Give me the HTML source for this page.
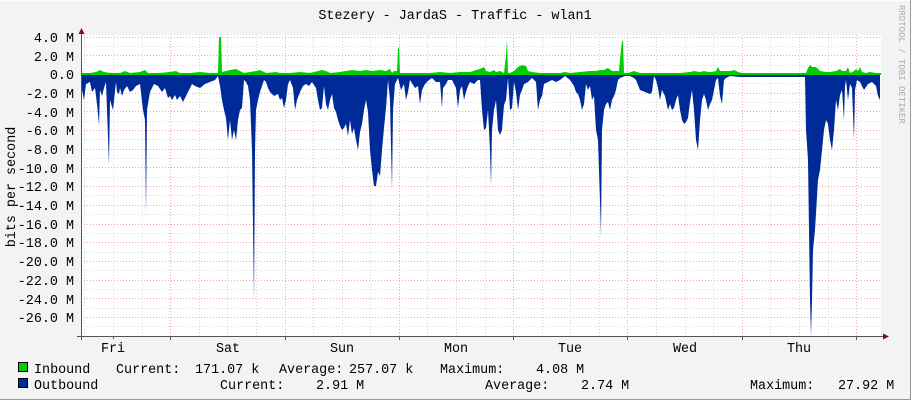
<!DOCTYPE html>
<html><head><meta charset="utf-8"><style>
html,body{margin:0;padding:0;background:#f3f3f3;}
svg{display:block}
text{font-family:"Liberation Mono","DejaVu Sans Mono",monospace;font-size:13.4px;fill:#000}
</style></head><body>
<svg width="911" height="400" viewBox="0 0 911 400" xmlns="http://www.w3.org/2000/svg">
<rect x="0" y="0" width="911" height="400" fill="#f3f3f3"/>
<line x1="0" y1="0.5" x2="911" y2="0.5" stroke="#fcfcfc"/>
<line x1="0" y1="399.5" x2="911" y2="399.5" stroke="#999"/>
<line x1="910.5" y1="0" x2="910.5" y2="400" stroke="#999"/>
<rect x="81" y="35" width="800" height="301" fill="#fff"/>
<g id="grid" stroke-width="1" shape-rendering="crispEdges">
<g stroke="#d6d6d6" stroke-dasharray="1,2">
<line x1="81" y1="46.5" x2="881" y2="46.5"/><line x1="81" y1="65.5" x2="881" y2="65.5"/><line x1="81" y1="83.5" x2="881" y2="83.5"/><line x1="81" y1="102.5" x2="881" y2="102.5"/><line x1="81" y1="121.5" x2="881" y2="121.5"/><line x1="81" y1="139.5" x2="881" y2="139.5"/><line x1="81" y1="158.5" x2="881" y2="158.5"/><line x1="81" y1="177.5" x2="881" y2="177.5"/><line x1="81" y1="195.5" x2="881" y2="195.5"/><line x1="81" y1="214.5" x2="881" y2="214.5"/><line x1="81" y1="233.5" x2="881" y2="233.5"/><line x1="81" y1="252.5" x2="881" y2="252.5"/><line x1="81" y1="270.5" x2="881" y2="270.5"/><line x1="81" y1="289.5" x2="881" y2="289.5"/><line x1="81" y1="308.5" x2="881" y2="308.5"/><line x1="81" y1="326.5" x2="881" y2="326.5"/>
<line x1="84.5" y1="35" x2="84.5" y2="336"/><line x1="113.5" y1="35" x2="113.5" y2="336"/><line x1="142.5" y1="35" x2="142.5" y2="336"/><line x1="199.5" y1="35" x2="199.5" y2="336"/><line x1="227.5" y1="35" x2="227.5" y2="336"/><line x1="256.5" y1="35" x2="256.5" y2="336"/><line x1="313.5" y1="35" x2="313.5" y2="336"/><line x1="342.5" y1="35" x2="342.5" y2="336"/><line x1="370.5" y1="35" x2="370.5" y2="336"/><line x1="427.5" y1="35" x2="427.5" y2="336"/><line x1="456.5" y1="35" x2="456.5" y2="336"/><line x1="485.5" y1="35" x2="485.5" y2="336"/><line x1="542.5" y1="35" x2="542.5" y2="336"/><line x1="570.5" y1="35" x2="570.5" y2="336"/><line x1="599.5" y1="35" x2="599.5" y2="336"/><line x1="656.5" y1="35" x2="656.5" y2="336"/><line x1="685.5" y1="35" x2="685.5" y2="336"/><line x1="713.5" y1="35" x2="713.5" y2="336"/><line x1="770.5" y1="35" x2="770.5" y2="336"/><line x1="799.5" y1="35" x2="799.5" y2="336"/><line x1="828.5" y1="35" x2="828.5" y2="336"/>
</g>
<g stroke="#f0a8a8" stroke-dasharray="1,2">
<line x1="81" y1="37.5" x2="881" y2="37.5"/><line x1="81" y1="55.5" x2="881" y2="55.5"/><line x1="81" y1="74.5" x2="881" y2="74.5"/><line x1="81" y1="93.5" x2="881" y2="93.5"/><line x1="81" y1="111.5" x2="881" y2="111.5"/><line x1="81" y1="130.5" x2="881" y2="130.5"/><line x1="81" y1="149.5" x2="881" y2="149.5"/><line x1="81" y1="167.5" x2="881" y2="167.5"/><line x1="81" y1="186.5" x2="881" y2="186.5"/><line x1="81" y1="205.5" x2="881" y2="205.5"/><line x1="81" y1="224.5" x2="881" y2="224.5"/><line x1="81" y1="242.5" x2="881" y2="242.5"/><line x1="81" y1="261.5" x2="881" y2="261.5"/><line x1="81" y1="280.5" x2="881" y2="280.5"/><line x1="81" y1="298.5" x2="881" y2="298.5"/><line x1="81" y1="317.5" x2="881" y2="317.5"/>
<line x1="170.5" y1="35" x2="170.5" y2="336"/><line x1="285.5" y1="35" x2="285.5" y2="336"/><line x1="399.5" y1="35" x2="399.5" y2="336"/><line x1="513.5" y1="35" x2="513.5" y2="336"/><line x1="627.5" y1="35" x2="627.5" y2="336"/><line x1="742.5" y1="35" x2="742.5" y2="336"/><line x1="856.5" y1="35" x2="856.5" y2="336"/>
</g>
</g>
<path fill="#002a97" d="M81,74 L82,90 84,100 86,84 90,82 92,92 95,88 97,104 99,125 100,90 102,96 104,88 106,82 109,165 110,100 113,110 116,82 117,92 119,94 120,88 122,96 124,90 127,86 130,92 133,90 136,86 140,84 143,110 145,120 146,215 147,110 150,92 154,84 158,86 162,92 165,88 168,98 170,96 172,100 175,95 177,100 180,96 183,102 186,96 188,92 190,88 192,84 195,86 200,88 205,84 210,82 215,80 218,76 220,86 222,100 224,110 226,118 228,140 230,120 232,140 234,130 236,140 238,120 240,110 242,108 244,80 246,82 248,86 250,100 252,150 254,300 255,150 256,110 258,100 260,92 262,86 264,80 266,82 268,88 270,92 274,96 278,94 280,100 282,98 284,108 286,100 288,84 290,80 293,88 295,110 297,100 300,92 303,86 306,84 309,86 312,82 316,88 318,100 320,110 322,108 324,86 326,104 328,110 330,100 332,94 334,108 336,112 338,120 340,126 342,130 344,128 346,124 348,136 350,120 352,134 354,128 356,140 358,150 360,132 362,124 364,110 366,100 368,112 370,150 372,170 374,186 376,186 378,172 380,176 382,150 384,128 386,108 388,80 390,100 392,190 393,110 395,84 398,78 401,90 404,84 406,100 408,92 410,80 415,88 418,86 420,104 422,90 425,84 429,80 432,78 436,82 440,82 442,108 443,88 446,84 448,80 452,80 456,88 458,108 460,90 462,86 464,100 466,92 468,86 470,82 474,84 478,80 480,80 482,110 484,130 486,128 488,110 490,150 491,186 492,130 494,110 496,100 498,130 500,135 502,130 504,105 506,100 508,78 510,110 512,108 514,82 516,92 518,110 520,95 522,90 524,84 528,82 532,78 536,82 538,110 540,100 542,96 544,84 548,82 552,80 556,82 560,80 565,76 570,80 574,86 576,92 578,94 580,100 582,110 584,104 586,84 588,90 590,86 592,100 594,96 596,130 598,140 600,200 601,236 602,130 604,110 606,104 608,102 610,110 612,100 614,96 616,90 618,80 620,78 625,76 630,76 634,78 636,80 640,90 645,92 650,94 652,92 654,76 656,80 658,88 660,100 662,90 665,96 668,110 670,104 672,110 674,108 676,100 678,95 680,110 682,120 684,124 686,122 688,118 690,102 692,90 694,110 696,140 698,150 700,120 702,100 704,94 706,100 708,110 710,104 712,100 714,90 716,80 718,78 720,96 722,104 724,80 726,78 730,76 740,77 805,77 806,130 808,160 810,300 811,336 812,300 813,250 815,230 818,180 820,170 822,150 824,130 826,120 828,124 830,140 832,150 834,130 836,100 838,110 840,95 842,90 844,120 845,86 846,80 848,100 850,84 852,88 854,140 855,90 857,80 860,82 864,90 868,84 872,82 876,86 878,96 880,100 880,74 Z"/>
<path fill="#00cc00" d="M81,74 L81,73 90,73 96,72 100,70 104,72 110,73 120,73 125,71 130,73 140,72 145,70 148,73 160,73 170,72 176,71 180,73 190,73 200,72 210,73 218,73 219,37 221,37 222,72 230,70 236,69 240,71 244,73 250,72 256,71 260,70 266,73 276,72 280,73 290,73 300,72 310,73 318,71 322,70 326,71 330,73 340,72 346,71 352,70 360,71 366,70 372,71 380,70 386,71 390,69 392,73 394,71 397,71 398,48 399,48 400,73 410,73 420,73 430,73 440,72 450,73 460,72 470,72 476,70 480,69 484,67 486,71 490,72 494,70 496,72 500,71 504,73 506,55 507,40 508,73 510,73 514,71 518,67 522,65 526,66 528,71 532,72 540,73 550,73 560,73 565,72 570,73 580,72 590,71 596,71 600,70 604,70 608,68 612,71 616,71 619,71 620,59 622,41 623,41 624,73 628,73 634,71 640,73 650,73 660,73 670,73 680,73 690,72 694,71 700,72 704,71 708,72 712,72 716,71 718,67 720,71 724,71 730,71 734,70 738,72 742,73 750,73 800,73 806,73 808,68 810,65 812,67 816,67 818,69 820,71 826,72 830,72 836,71 840,69 842,71 846,71 848,67 850,73 854,71 856,69 858,71 860,67 862,72 866,73 870,72 876,73 880,73 880,74 Z"/>
<line x1="81" y1="74" x2="881" y2="74" stroke="#00cc00" stroke-width="2"/>
<line x1="81.5" y1="32" x2="81.5" y2="340" stroke="#555"/>
<line x1="77" y1="336.5" x2="885" y2="336.5" stroke="#555"/>
<g stroke="#555" shape-rendering="crispEdges"><line x1="113.5" y1="336" x2="113.5" y2="339"/><line x1="170.5" y1="336" x2="170.5" y2="340"/><line x1="285.5" y1="336" x2="285.5" y2="340"/><line x1="399.5" y1="336" x2="399.5" y2="340"/><line x1="513.5" y1="336" x2="513.5" y2="340"/><line x1="627.5" y1="336" x2="627.5" y2="340"/><line x1="742.5" y1="336" x2="742.5" y2="340"/><line x1="856.5" y1="336" x2="856.5" y2="340"/></g>
<polygon points="78.5,34 84.5,34 81.5,28" fill="#7f1010"/>
<polygon points="883,333.5 883,339.5 889,336.5" fill="#7f1010"/>
<text x="455" y="19" text-anchor="middle">Stezery - JardaS - Traffic - wlan1</text>
<g text-anchor="end">
<text x="74" y="42">4.0 M</text><text x="74" y="61">2.0 M</text><text x="74" y="79">0.0</text><text x="74" y="98">-2.0 M</text><text x="74" y="117">-4.0 M</text><text x="74" y="135">-6.0 M</text><text x="74" y="154">-8.0 M</text><text x="74" y="173">-10.0 M</text><text x="74" y="191">-12.0 M</text><text x="74" y="210">-14.0 M</text><text x="74" y="229">-16.0 M</text><text x="74" y="247">-18.0 M</text><text x="74" y="266">-20.0 M</text><text x="74" y="285">-22.0 M</text><text x="74" y="304">-24.0 M</text><text x="74" y="322">-26.0 M</text>
</g>
<text transform="translate(15,187) rotate(-90)" text-anchor="middle">bits per second</text>
<text transform="translate(899,5) rotate(90)" style="font-size:9px;fill:#aaa">RRDTOOL / TOBI OETIKER</text>
<g text-anchor="middle">
<text x="113" y="352">Fri</text><text x="228" y="352">Sat</text><text x="342" y="352">Sun</text><text x="456" y="352">Mon</text><text x="570" y="352">Tue</text><text x="685" y="352">Wed</text><text x="799" y="352">Thu</text>
</g>
<rect x="18.5" y="362.5" width="9" height="9" fill="#00cc00" stroke="#000"/>
<rect x="18.5" y="378.5" width="9" height="9" fill="#002a97" stroke="#000"/>
<text x="34" y="373">Inbound</text><text x="116" y="373">Current:</text><text x="195" y="373">171.07 k</text><text x="279" y="373">Average:</text><text x="349" y="373">257.07 k</text><text x="440" y="373">Maximum:</text><text x="536" y="373">4.08 M</text>
<text x="34" y="389">Outbound</text><text x="220" y="389">Current:</text><text x="316" y="389">2.91 M</text><text x="485" y="389">Average:</text><text x="581" y="389">2.74 M</text><text x="750" y="389">Maximum:</text><text x="838" y="389">27.92 M</text>
</svg>
</body></html>
